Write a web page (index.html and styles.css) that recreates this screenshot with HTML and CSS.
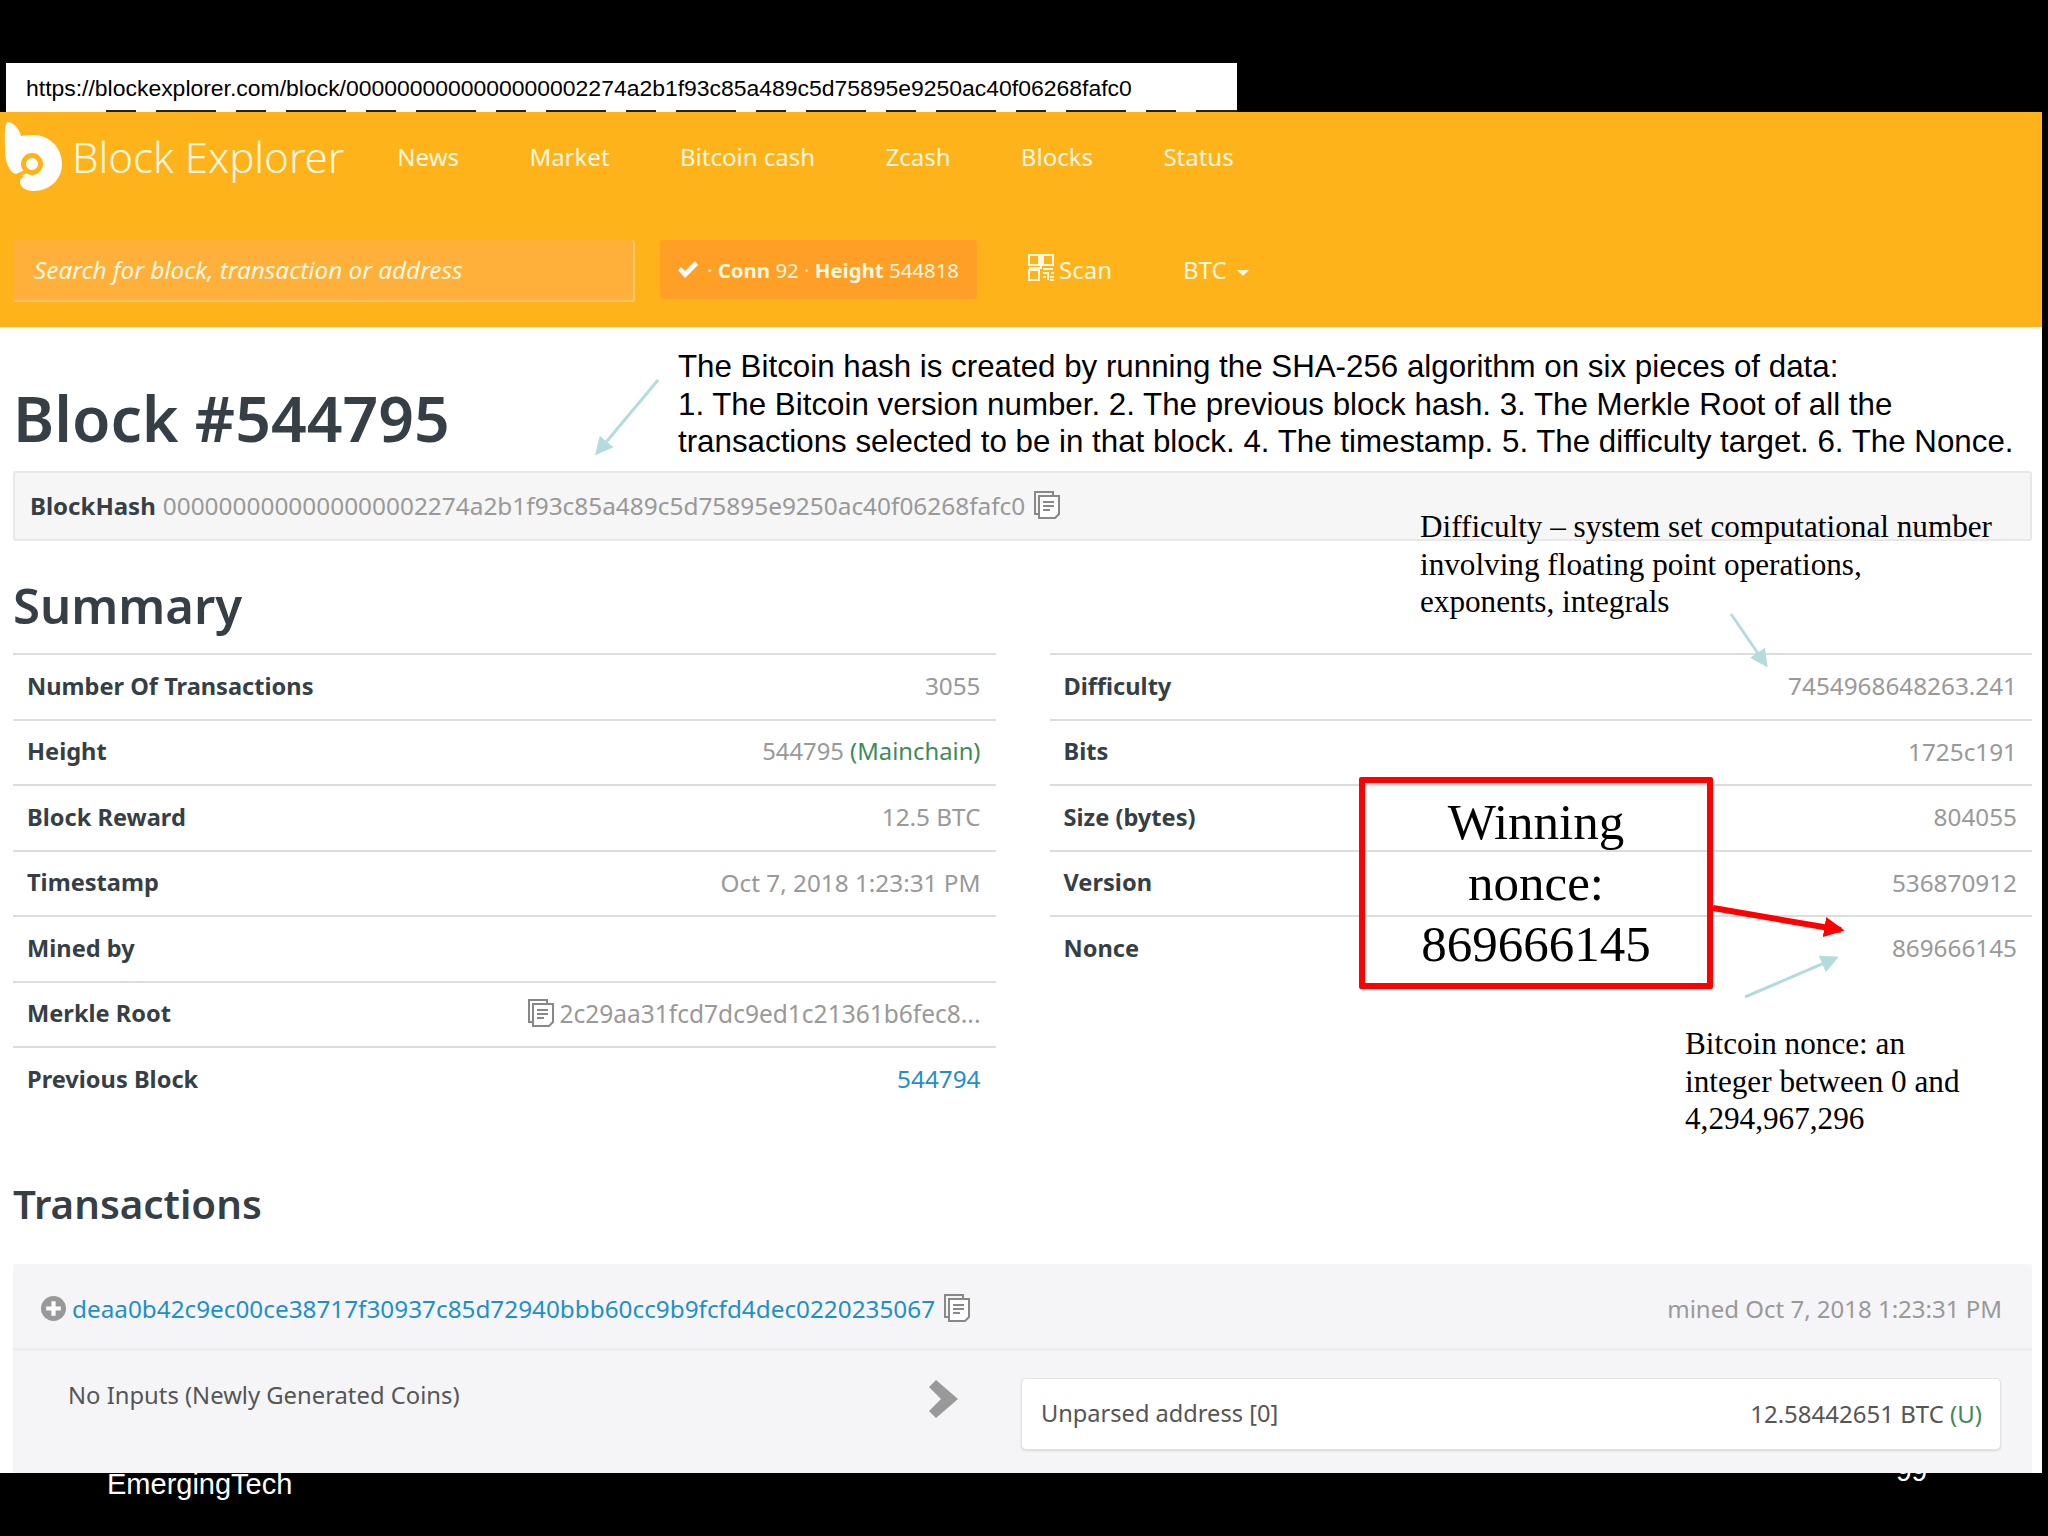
FILE: index.html
```html
<!DOCTYPE html>
<html lang="en">

<head>
    <meta charset="UTF-8">
    <title>Block Explorer slide</title>
    <link rel="stylesheet" href="styles.css">
</head>

<body>
    <div class="slide">
        <div class="url-bar">https://blockexplorer.com/block/0000000000000000002274a2b1f93c85a489c5d75895e9250ac40f06268fafc0</div>

        <div class="page">
            <header class="site-header">
                <div class="nav-row">
                    <svg class="logo" viewBox="0 0 60 72">
                        <path fill="#fff" d="M3 1C9 1 15 7 17 15C21 14 25 14 29 14C46 14 58 27 58 43C58 59 45 70 29 70C22 70 16 66 16 61C16 58 18 56 21 56L9 52C3 46 1 38 1 28C1 18 0 6 3 1Z" />
                        <circle cx="28" cy="43" r="8.5" fill="none" stroke="#ffb31a" stroke-width="5" />
                        <path fill="none" stroke="#ffb31a" stroke-width="4" d="M21 51L10 56" />
                    </svg>
                    <span class="brand">Block Explorer</span>
                    <nav class="main-nav">
                        <a>News</a>
                        <a>Market</a>
                        <a>Bitcoin cash</a>
                        <a>Zcash</a>
                        <a>Blocks</a>
                        <a>Status</a>
                    </nav>
                </div>
                <div class="search-row">
                    <div class="search-box">Search for block, transaction or address</div>
                    <div class="status-btn">
                        <svg class="check" viewBox="0 0 22 18">
                            <path fill="#fff" d="M1 9L4 6L8 10L18 0L21 4L8 17Z" />
                        </svg>
                        <span>· <b>Conn</b> 92 · <b>Height</b> 544818</span>
                    </div>
                    <div class="scan">
                        <svg class="qr" viewBox="0 0 26 27">
                            <g fill="none" stroke="#fff8e0" stroke-width="2">
                                <rect x="1" y="1" width="10" height="10" />
                                <rect x="15" y="1" width="10" height="10" />
                                <rect x="1" y="16" width="10" height="10" />
                                <path d="M13 0V14H1M15 15H25M15 19H20V26M23 19H26M15 23H18M22 23H26M22 26H26" />
                            </g>
                        </svg>
                        Scan
                    </div>
                    <div class="coin">BTC <i class="caret"></i></div>
                </div>
            </header>

            <main class="content">
                <h1>Block #544795</h1>
                <div class="hash-well">
                    <b>BlockHash</b>
                    <span class="muted hash">0000000000000000002274a2b1f93c85a489c5d75895e9250ac40f06268fafc0</span>
                    <svg class="copy" viewBox="0 0 26 28"><use href="#copy-icon" /></svg>
                </div>

                <h2 class="summary-title">Summary</h2>
                <div class="summary">
                    <div class="rows">
                        <div class="row"><b>Number Of Transactions</b><span class="muted">3055</span></div>
                        <div class="row"><b>Height</b><span class="muted height-value">544795 <em class="green">(Mainchain)</em></span></div>
                        <div class="row"><b>Block Reward</b><span class="muted">12.5 BTC</span></div>
                        <div class="row"><b>Timestamp</b><span class="muted">Oct 7, 2018 1:23:31 PM</span></div>
                        <div class="row"><b>Mined by</b></div>
                        <div class="row">
                            <b>Merkle Root</b>
                            <span class="muted merkle">
                                <svg class="copy" viewBox="0 0 26 28"><use href="#copy-icon" /></svg>
                                2c29aa31fcd7dc9ed1c21361b6fec8...
                            </span>
                        </div>
                        <div class="row"><b>Previous Block</b><span class="link">544794</span></div>
                    </div>
                    <div class="rows">
                        <div class="row"><b>Difficulty</b><span class="muted">7454968648263.241</span></div>
                        <div class="row"><b>Bits</b><span class="muted">1725c191</span></div>
                        <div class="row"><b>Size (bytes)</b><span class="muted">804055</span></div>
                        <div class="row"><b>Version</b><span class="muted">536870912</span></div>
                        <div class="row"><b>Nonce</b><span class="muted">869666145</span></div>
                    </div>
                </div>

                <h2 class="tx-title">Transactions</h2>
                <div class="tx-panel">
                    <div class="tx-head">
                        <svg class="plus" viewBox="0 0 24 24">
                            <circle cx="12" cy="12" r="12" fill="#999" />
                            <path fill="#fff" d="M10 5H14V10H19V14H14V19H10V14H5V10H10Z" />
                        </svg>
                        <span class="link">deaa0b42c9ec00ce38717f30937c85d72940bbb60cc9b9fcfd4dec0220235067</span>
                        <svg class="copy" viewBox="0 0 26 28"><use href="#copy-icon" /></svg>
                        <span class="muted mined">mined Oct 7, 2018 1:23:31 PM</span>
                    </div>
                    <div class="tx-body">
                        <div class="tx-inputs">No Inputs (Newly Generated Coins)</div>
                        <svg class="chevron" viewBox="0 0 29 38">
                            <path fill="#999" d="M0 7L7 0L29 19L7 38L0 31L12 19Z" />
                        </svg>
                        <div class="tx-output">
                            <span class="unparsed">Unparsed address [0]</span>
                            <span>12.58442651 BTC <em class="green">(U)</em></span>
                        </div>
                    </div>
                </div>
            </main>
        </div>

        <div class="slide-footer">EmergingTech</div>
        <div class="page-number">99</div>

        <!-- slide annotations, drawn over the screenshot -->
        <div class="note note-hash">The Bitcoin hash is created by running the SHA-256 algorithm on six pieces of data:<br>1. The Bitcoin version number. 2. The previous block hash. 3. The Merkle Root of all the<br>transactions selected to be in that block. 4. The timestamp. 5. The difficulty target. 6. The Nonce.</div>
        <div class="note note-difficulty">Difficulty – system set computational number<br>involving floating point operations,<br>exponents, integrals</div>
        <div class="note note-nonce">Bitcoin nonce: an<br>integer between 0 and<br>4,294,967,296</div>
        <div class="winning-box">Winning<br>nonce:<br>869666145</div>

        <svg class="arrows" viewBox="0 0 2048 1536">
            <defs>
                <marker id="tealHead" markerWidth="6" markerHeight="6" refX="5" refY="3" orient="auto">
                    <path fill="#b5dcdc" d="M0 0L6 3L0 6Z" />
                </marker>
                <marker id="redHead" markerWidth="3.4" markerHeight="3.4" refX="2.8" refY="1.7" orient="auto">
                    <path fill="#f00" d="M0 0L3.4 1.7L0 3.4Z" />
                </marker>
                <symbol id="copy-icon" viewBox="0 0 26 28">
                    <path fill="none" stroke="#888" stroke-width="2" d="M19 5V1H1V23H5" />
                    <path fill="#fff" stroke="#888" stroke-width="2" d="M5 5H25V23L21 27H5Z" />
                    <path fill="none" stroke="#888" stroke-width="2" d="M9 11H20M9 15H20M9 19H16" />
                </symbol>
            </defs>
            <g stroke="#b5dcdc" stroke-width="3">
                <line x1="658" y1="380" x2="597" y2="453" marker-end="url(#tealHead)" />
                <line x1="1731" y1="614" x2="1766" y2="665" marker-end="url(#tealHead)" />
                <line x1="1745" y1="997" x2="1836" y2="958" marker-end="url(#tealHead)" />
            </g>
            <line x1="1713" y1="908" x2="1841" y2="930" stroke="#f00" stroke-width="6" marker-end="url(#redHead)" />
        </svg>
    </div>
</body>

</html>
```

FILE: styles.css
```css
html,
body {
    margin: 0;
    padding: 0;
}

body {
    background: #000;
    font-family: 'Noto Sans', sans-serif;
    overflow: hidden;
}

.slide {
    position: relative;
    width: 2048px;
    height: 1536px;
    padding-top: 63px;
    box-sizing: border-box;
    background: #000;
    overflow: hidden;
}

.url-bar {
    width: 1231px;
    height: 49px;
    margin-left: 6px;
    padding-left: 20px;
    box-sizing: border-box;
    background: #fff repeating-linear-gradient(90deg, #222 0, #222 30px, #fff 30px, #fff 50px, #222 50px, #222 110px, #fff 110px, #fff 130px) 100px bottom / 100% 2px no-repeat;
    color: #000;
    font-family: 'Liberation Sans', sans-serif;
    font-size: 22.95px;
    line-height: 51px;
}

.page {
    position: relative;
    z-index: 1;
    width: 2042px;
    height: 1361px;
    background: #fff;
    overflow: hidden;
}

/* header */
.site-header {
    height: 215px;
    background: #ffb31a;
    color: #fff8e0;
}

.nav-row {
    display: flex;
    align-items: center;
    height: 88px;
}

.logo {
    width: 60px;
    height: 72px;
    margin: 2px 0 0 4px;
}

.brand {
    margin-left: 8px;
    font-size: 42px;
    font-weight: 300;
}

.main-nav {
    display: flex;
    gap: 70.4px;
    margin-left: 53px;
    font-size: 24px;
}

.search-row {
    display: flex;
    align-items: flex-start;
    margin-top: 40px;
    font-size: 24px;
}

.search-box {
    width: 622px;
    height: 62px;
    margin-left: 13px;
    padding-left: 21px;
    box-sizing: border-box;
    background: #ffb03a;
    border-bottom: 2px solid #ffc766;
    border-right: 2px solid #ffc766;
    border-radius: 3px;
    font-size: 24.3px;
    font-style: italic;
    line-height: 60px;
}

.status-btn {
    display: flex;
    align-items: center;
    gap: 8px;
    width: 317px;
    height: 59px;
    margin-left: 25px;
    padding-left: 17px;
    box-sizing: border-box;
    background: #ff9f25;
    border-radius: 4px;
    font-size: 20.4px;
    white-space: nowrap;
}

.check {
    width: 22px;
    height: 18px;
}

.scan {
    display: flex;
    align-items: center;
    gap: 5px;
    height: 59px;
    margin-left: 51px;
}

.qr {
    width: 26px;
    height: 27px;
    margin-top: -4px;
}

.coin {
    height: 59px;
    margin-left: 71px;
    line-height: 59px;
}

.caret {
    display: inline-block;
    margin-left: 4px;
    vertical-align: middle;
    border-top: 6px solid #fff8e0;
    border-left: 6px solid transparent;
    border-right: 6px solid transparent;
}

/* block details */
.content {
    padding: 0 10px 0 13px;
    color: #363f45;
    font-size: 24px;
}

b {
    font-weight: 700;
}

.row b {
    font-size: 23.6px;
}

em {
    font-style: normal;
}

h1 {
    margin: 56px 0 18px 0;
    font-size: 62.5px;
    font-weight: 600;
    line-height: 70px;
}

h2 {
    margin: 0;
    font-weight: 600;
}

.hash-well {
    display: flex;
    align-items: center;
    gap: 7px;
    height: 70px;
    padding: 0 0 2px 15px;
    box-sizing: border-box;
    background: #f6f6f6;
    border: 2px solid #e8e8e8;
    border-radius: 3px;
}

.muted {
    color: #999;
    font-size: 24.3px;
}

.hash {
    font-size: 24.4px;
}

.height-value {
    font-size: 23.8px;
}

.green {
    color: #3d8b5b;
}

.link {
    color: #1f8fc9;
    font-size: 24.3px;
}

.copy {
    width: 26px;
    height: 28px;
    flex: none;
}

.hash-well .copy {
    margin-left: 2px;
}

.summary-title {
    margin: 34px 0 18px 0;
    font-size: 49px;
    line-height: 60px;
}

.summary {
    display: grid;
    grid-template-columns: 1fr 1fr;
    column-gap: 54px;
    align-items: start;
    height: 458px;
}

.row {
    display: flex;
    justify-content: space-between;
    align-items: center;
    height: 65.5px;
    padding: 0 15px 2px 14px;
    box-sizing: border-box;
    border-top: 2px solid #ddd;
}

.merkle {
    display: flex;
    align-items: center;
    gap: 6px;
    font-size: 24.5px;
}

.tx-title {
    margin: 65px 0 32px 0;
    font-size: 40.3px;
    line-height: 56px;
}

.tx-panel {
    height: 300px;
    background: #f5f5f7;
    border-radius: 3px;
}

.tx-head {
    display: flex;
    align-items: center;
    height: 87px;
    padding: 4px 30px 0 28px;
    border-bottom: 3px solid #ececee;
    box-sizing: border-box;
}

.plus {
    width: 25px;
    height: 25px;
    margin-right: 6px;
}

.tx-head .copy {
    margin-left: 9px;
}

.mined {
    margin-left: auto;
    font-size: 24px;
}

.tx-body {
    display: flex;
    align-items: flex-start;
    padding: 27px 31px 0 55px;
}

.tx-inputs {
    width: 861px;
    color: #555;
    font-size: 23.8px;
    line-height: 34px;
}

.chevron {
    width: 29px;
    height: 38px;
    margin: 2px 0 0 0;
}

.tx-output {
    display: flex;
    justify-content: space-between;
    align-items: center;
    width: 980px;
    height: 72px;
    margin-left: 63px;
    padding: 0 18px 2px 19px;
    box-sizing: border-box;
    background: #fff;
    border: 1px solid #e2e2e4;
    border-radius: 5px;
    box-shadow: 0 1px 2px rgba(0, 0, 0, 0.12);
    color: #555;
}

.unparsed {
    font-size: 23.6px;
}

/* slide chrome */
.slide-footer {
    margin: -7px 0 0 107px;
    color: #fff;
    font-family: 'Liberation Sans', sans-serif;
    font-size: 29px;
    line-height: 36px;
}

.page-number {
    position: absolute;
    left: 1896px;
    top: 1454px;
    color: #fff;
    font-family: 'Liberation Sans', sans-serif;
    font-size: 28px;
    line-height: 36px;
}

/* annotations sit on top of the screenshot */
.note,
.winning-box,
.arrows {
    position: absolute;
    z-index: 2;
}

.note {
    color: #000;
    white-space: nowrap;
}

.note-hash {
    left: 678px;
    top: 348px;
    font-family: 'Liberation Sans', sans-serif;
    font-size: 31.3px;
    line-height: 37.6px;
}

.note-difficulty {
    left: 1420px;
    top: 508px;
    font-family: 'Liberation Serif', serif;
    font-size: 31.2px;
    line-height: 37.5px;
}

.note-nonce {
    left: 1685px;
    top: 1025px;
    font-family: 'Liberation Serif', serif;
    font-size: 31.2px;
    line-height: 37.5px;
}

.winning-box {
    left: 1359px;
    top: 777px;
    width: 354px;
    height: 212px;
    padding-top: 9px;
    box-sizing: border-box;
    border: 6px solid #f00;
    border-radius: 2px;
    color: #000;
    font-family: 'Liberation Serif', serif;
    font-size: 51px;
    line-height: 61px;
    text-align: center;
}

.arrows {
    left: 0;
    top: 0;
    width: 2048px;
    height: 1536px;
    pointer-events: none;
}
```
